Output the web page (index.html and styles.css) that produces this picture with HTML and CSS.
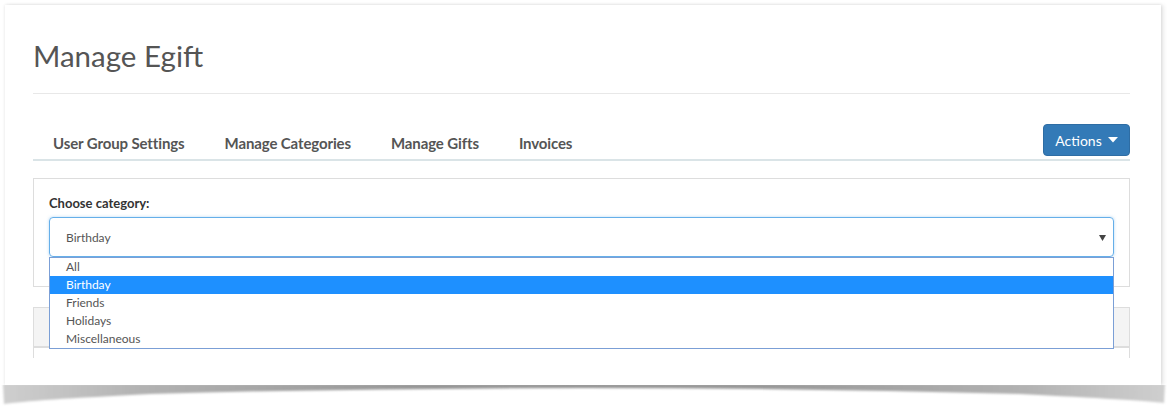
FILE: index.html
```html
<!DOCTYPE html>
<html>
<head>
<meta charset="utf-8">
<link rel="stylesheet" href="styles.css">
</head>
<body>
<div class="sheet">
  <div class="inner">
    <h1 class="title">Manage Egift</h1>
    <div class="tabbar">
      <ul class="tabs">
        <li>User Group Settings</li>
        <li>Manage Categories</li>
        <li>Manage Gifts</li>
        <li>Invoices</li>
      </ul>
      <button class="actions">Actions <svg class="caret" width="10" height="6" viewBox="0 0 10 6"><path d="M0 0H10L5 5.5Z" fill="#fff"/></svg></button>
    </div>
    <div class="panel">
      <label class="label">Choose category:</label>
      <div class="select-wrap">
        <div class="select">
          <span>Birthday</span>
          <svg class="arrow" width="7" height="6" viewBox="0 0 7 6"><path d="M0 0H7L3.5 6Z" fill="#444"/></svg>
        </div>
        <ul class="options">
          <li>All</li>
          <li class="sel">Birthday</li>
          <li>Friends</li>
          <li>Holidays</li>
          <li>Miscellaneous</li>
        </ul>
      </div>
    </div>
    <div class="panel2">
      <div class="panel2-head"></div>
    </div>
  </div>
  <svg class="lift" width="1175" height="28" viewBox="0 0 1175 28">
    <defs>
      <linearGradient id="sg" x1="0" y1="0" x2="1" y2="0">
        <stop offset="0" stop-color="#cfcfcf"/>
        <stop offset="0.12" stop-color="#b2b2b2"/>
        <stop offset="0.35" stop-color="#979797"/>
        <stop offset="0.5" stop-color="#939393"/>
        <stop offset="0.65" stop-color="#979797"/>
        <stop offset="0.88" stop-color="#b2b2b2"/>
        <stop offset="1" stop-color="#cfcfcf"/>
      </linearGradient>
      <filter id="sb" x="-0.02" y="-0.5" width="1.04" height="2">
        <feGaussianBlur stdDeviation="1.1"/>
      </filter>
    </defs>
    <path d="M3,-1 L1165,-1 L1164,18 Q1140,15 1020,9 Q800,3 585,3 Q370,3 150,9 Q30,15 4,19 Z" fill="url(#sg)" filter="url(#sb)"/>
  </svg>
</div>
</body>
</html>
```
FILE: styles.css
```css
html, body {
  margin: 0;
  padding: 0;
}
html {
  background: #fff;
}
body {
  font-family: Lato, "Noto Sans", sans-serif;
  width: 1175px;
  height: 414px;
  overflow: hidden;
}
.sheet {
  position: relative;
  margin: 5px 0 0 5px;
  width: 1156px;
  height: 380px;
  background: #fff;
  box-shadow: 0 0 3px rgba(0,0,0,0.12), 3px 0 4px rgba(0,0,0,0.08);
}
.lift {
  position: absolute;
  left: -5px;
  top: 100%;
  display: block;
}
.inner {
  padding: 0 31px 0 28px;
}
.title {
  margin: 0;
  padding-top: 33px;
  height: 55px;
  font-size: 29.5px;
  line-height: 36px;
  font-weight: 400;
  color: #555;
  border-bottom: 1px solid #e8e8e8;
}
.tabbar {
  margin-top: 30px;
  height: 35px;
  display: flex;
  justify-content: space-between;
  align-items: flex-start;
  border-bottom: 2px solid #dae4e7;
}
.tabs {
  list-style: none;
  margin: 0;
  padding: 0;
  display: flex;
}
.tabs li {
  padding: 0 20px;
  font-size: 15px;
  font-weight: 700;
  line-height: 20px;
  letter-spacing: -0.12px;
  margin-top: 9px;
  color: #555;
}
.actions {
  width: 87px;
  height: 32px;
  background: #337ab7;
  border: 1px solid #2e6da4;
  border-radius: 4px;
  color: #fff;
  font-family: Lato, "Noto Sans", sans-serif;
  font-size: 14px;
  padding: 0;
  display: flex;
  align-items: center;
  justify-content: center;
  gap: 6px;
}
.panel {
  margin-top: 17px;
  border: 1px solid #ddd;
  height: 107px;
  padding: 0 15px;
}
.label {
  display: block;
  margin-top: 16px;
  font-size: 13px;
  font-weight: 700;
  line-height: 16px;
  color: #333;
}
.select-wrap {
  position: relative;
  margin-top: 6px;
}
.select {
  height: 38px;
  border: 1px solid #66afe9;
  border-radius: 4px;
  box-shadow: 0 0 3px rgba(102,175,233,0.5);
  display: flex;
  align-items: center;
  justify-content: space-between;
  padding: 0 7px 0 16px;
  font-size: 12px;
  color: #555;
}
.arrow {
  margin-top: 1px;
}
.options {
  position: absolute;
  left: 0;
  right: 0;
  top: 40px;
  margin: 0;
  padding: 0;
  list-style: none;
  border: 1px solid #7b9fd6;
  background: #fff;
  z-index: 2;
}
.options li {
  height: 18px;
  line-height: 18px;
  padding-left: 16px;
  font-size: 12px;
  color: #555;
}
.options li.sel {
  background: #1e90ff;
  color: #fff;
}
.panel2 {
  margin-top: 20px;
  height: 50px;
  border: 1px solid #ddd;
  border-bottom: none;
}
.panel2-head {
  height: 38px;
  background: #f4f4f4;
  border-bottom: 2px solid #ddd;
}
```
